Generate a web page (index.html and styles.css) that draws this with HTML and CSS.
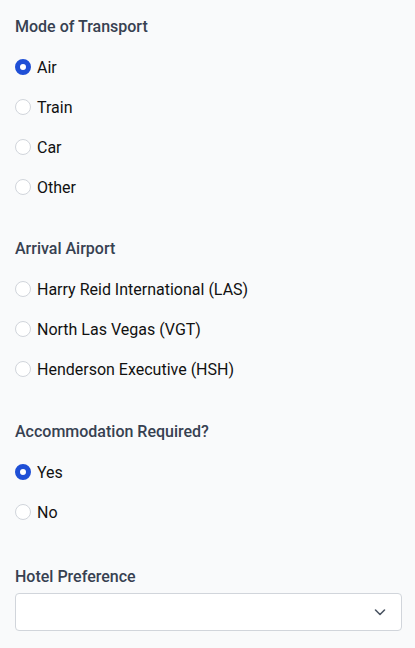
FILE: index.html
```html
<!DOCTYPE html>
<html lang="en">
<head>
    <meta charset="UTF-8">
    <meta name="viewport" content="width=device-width, initial-scale=1.0">
    <title>Travel Details</title>
    <link rel="stylesheet" href="styles.css">
</head>
<body>
    <form id="travel">
        <fieldset class="group">
            <legend class="label">Mode of Transport</legend>
            <div class="options">
                <label class="option"><input type="radio" name="transport" value="air" checked> Air</label>
                <label class="option"><input type="radio" name="transport" value="train"> Train</label>
                <label class="option"><input type="radio" name="transport" value="car"> Car</label>
                <label class="option"><input type="radio" name="transport" value="other"> Other</label>
            </div>
        </fieldset>

        <fieldset class="group">
            <legend class="label">Arrival Airport</legend>
            <div class="options">
                <label class="option"><input type="radio" name="airport" value="LAS"> Harry Reid International (LAS)</label>
                <label class="option"><input type="radio" name="airport" value="VGT"> North Las Vegas (VGT)</label>
                <label class="option"><input type="radio" name="airport" value="HSH"> Henderson Executive (HSH)</label>
            </div>
        </fieldset>

        <fieldset class="group group-last">
            <legend class="label">Accommodation Required?</legend>
            <div class="options">
                <label class="option"><input type="radio" name="hotel" value="yes" checked> Yes</label>
                <label class="option"><input type="radio" name="hotel" value="no"> No</label>
            </div>
        </fieldset>

        <div class="group">
            <label class="label" for="hotel-pref">Hotel Preference</label>
            <div class="select-wrap">
                <select id="hotel-pref">
                    <option value=""></option>
                    <option value="strip">On the Strip</option>
                    <option value="downtown">Downtown</option>
                    <option value="henderson">Henderson</option>
                </select>
                <svg class="chevron" width="14" height="14" viewBox="0 0 14 14" fill="none">
                    <path d="M2.5 5l4.5 4.5L11.5 5" stroke="#4b5563" stroke-width="1.6" stroke-linecap="round" stroke-linejoin="round"/>
                </svg>
            </div>
        </div>
    </form>
</body>
</html>
```

FILE: styles.css
```css
body {
    margin: 0;
    background: #f9fafb;
    font-family: Roboto, "Liberation Sans", sans-serif;
    color: #111827;
}

#travel {
    padding: 17px 13px 0 15px;
}

.group {
    border: none;
    margin: 0 0 41px 0;
    padding: 0;
    min-width: 0;
}

.group:first-child {
    margin-bottom: 40px;
}

.group-last {
    margin-bottom: 43px;
}

.label {
    display: block;
    float: left;
    width: 100%;
    padding: 0;
    font-size: 16px;
    font-weight: 500;
    line-height: 20px;
    color: #374151;
}

.options {
    clear: both;
    display: flex;
    flex-direction: column;
    gap: 16px;
    padding-top: 18px;
}

.option {
    display: flex;
    align-items: center;
    gap: 6px;
    height: 24px;
    font-size: 16px;
    color: #111111;
    cursor: pointer;
}

.option input {
    appearance: none;
    -webkit-appearance: none;
    margin: 0;
    width: 16px;
    height: 16px;
    border: 1px solid #d1d5db;
    border-radius: 50%;
    background: #fff;
    flex-shrink: 0;
}

.option input:checked {
    border: 5px solid #1f4fd6;
}

.select-wrap {
    clear: both;
    position: relative;
    padding-top: 6px;
}

select {
    appearance: none;
    -webkit-appearance: none;
    display: block;
    width: 100%;
    height: 38px;
    padding: 0 36px 0 12px;
    border: 1px solid #d1d5db;
    border-radius: 4px;
    background: #fff;
    font-family: inherit;
    font-size: 16px;
    color: #111827;
}

.chevron {
    position: absolute;
    right: 15px;
    top: 18px;
    pointer-events: none;
}
```
